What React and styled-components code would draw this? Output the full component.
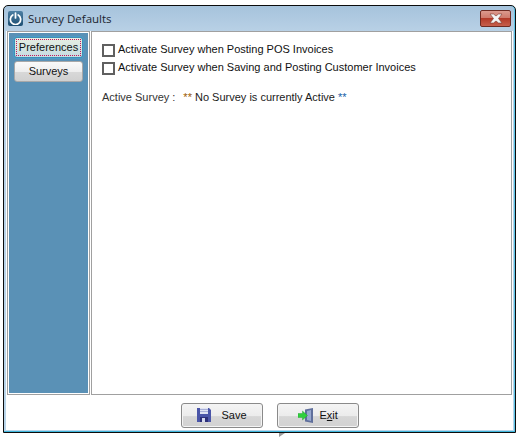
import React from 'react'
import styled, { createGlobalStyle } from 'styled-components'

const Global = createGlobalStyle`
  html, body { margin: 0; padding: 0; background: #fff; }
  body { font-family: "Liberation Sans", Arial, sans-serif; }
`

const Page = styled.div`
  width: 523px;
  height: 437px;
  padding: 5px 0 0 3px;
  box-sizing: border-box;
  overflow: hidden;
`
const Window = styled.div`
  width: 513px;
  height: 428px;
  box-sizing: border-box;
  border: 1px solid #0c0c0c;
  border-radius: 5px 5px 0 0;
  background: linear-gradient(180deg, #a6c3dc 0, #b9d1e6 26px, #b9d5ea 100%);
  padding: 0 2px 2px 2px;
  display: flex;
  flex-direction: column;
  box-shadow: inset 0 -1px 0 #3fb6dc, inset -1px 0 0 #5cc4e6;
`
const TitleBar = styled.div`
  height: 25px;
  flex: none;
  display: flex;
  align-items: center;
  gap: 5px;
  padding: 0 2px 0 2px;
`
const AppIcon = styled.div`
  width: 15px;
  height: 15px;
  border-radius: 2px;
  background: linear-gradient(180deg, #4d7fa3, #1d4f73);
  display: flex;
  align-items: center;
  justify-content: center;
`
const Title = styled.div`
  flex: 1;
  font-family: "Open Sans", sans-serif;
  font-size: 11.5px;
  color: #1b2530;
`
const CloseButton = styled.div`
  width: 31px;
  height: 17px;
  box-sizing: border-box;
  border: 1px solid #6e2b22;
  border-radius: 2px;
  background: linear-gradient(180deg, #dc9a8e 0, #cf7b6c 45%, #b33a28 50%, #c65f4c 100%);
  display: flex;
  align-items: center;
  justify-content: center;
`
const Body = styled.div`
  flex: 1;
  background: #fff;
  padding: 0 1px;
  display: flex;
  flex-direction: column;
`
const Panels = styled.div`
  height: 364px;
  flex: none;
  display: flex;
  gap: 1px;
`
const Sidebar = styled.div`
  width: 83px;
  box-sizing: border-box;
  border: 1px solid #a0a0a0;
  background: #5a91b6;
  box-shadow: inset 0 0 0 1px #fff;
  padding: 5px 6px 0 6px;
  display: flex;
  flex-direction: column;
  gap: 3px;
`
const TabButton = styled.div`
  height: 21px;
  box-sizing: border-box;
  padding-bottom: 1px;
  border: 1px solid ${p => (p.$active ? '#3f8fb5' : '#a8a8a8')};
  border-radius: 3px;
  background: ${p => (p.$active
    ? 'linear-gradient(180deg, #e6eee2, #c6dde2)'
    : 'linear-gradient(180deg, #fafafa 0, #eeeeee 50%, #d8d8d8 55%, #d0d0d0 100%)')};
  box-shadow: ${p => (p.$active ? '0 0 0 1px #4a9cc8' : 'none')};
  font-size: 11px;
  color: #111;
  display: flex;
  align-items: center;
  justify-content: center;
  position: relative;
  ${p => p.$active && `
    &::after {
      content: '';
      position: absolute;
      inset: 1px;
      border: 1px dotted #c2185b;
    }
  `}
`
const Main = styled.div`
  flex: 1;
  box-sizing: border-box;
  border: 1px solid #a0a0a0;
  background: #fff;
  padding: 8px 10px;
`
const CheckRow = styled.label`
  display: flex;
  align-items: center;
  gap: 3px;
  height: 18px;
  font-size: 11px;
  color: #111;
`
const Box = styled.span`
  width: 13px;
  height: 13px;
  margin-top: 2px;
  box-sizing: border-box;
  border: 2px solid #606060;
  background: #fff;
`
const Status = styled.div`
  margin-top: 15px;
  font-size: 11px;
  color: #1a1a1a;
  display: flex;
  gap: 8px;
`
const StatusNote = styled.span`
  color: #333;
`
const Stars = styled.span`
  color: ${p => p.$c};
`
const Footer = styled.div`
  flex: 1;
  display: flex;
  justify-content: center;
  align-items: center;
  gap: 14px;
  padding: 5px 0 0 20px;
`
const ActionButton = styled.div`
  width: 82px;
  height: 25px;
  box-sizing: border-box;
  border: 1px solid #8a8a8a;
  border-radius: 3px;
  background: linear-gradient(180deg, #f4f4f4 0, #ececec 50%, #d6d6d6 55%, #d2d2d2 100%);
  box-shadow: inset 0 0 0 1px #f4f4f4;
  display: flex;
  align-items: center;
  padding-left: ${p => p.$pad}px;
  gap: ${p => p.$gap}px;
  font-size: 11px;
  color: #111;
`
const Pointer = styled.div`
  position: absolute;
  left: 279px;
  top: 433px;
  width: 0;
  height: 0;
  border-top: 4px solid #999;
  border-right: 6px solid transparent;
`

const Underline = styled.span`
  text-decoration: underline;
`

export default function App() {
  return (
    <Page>
      <Global />
      <Window>
        <TitleBar>
          <AppIcon>
            <svg width="13" height="13" viewBox="0 0 24 24" fill="none" stroke="#fff" strokeWidth="3.2" strokeLinecap="round">
              <path d="M7 5.5a9.5 9.5 0 1 0 10 0" />
              <path d="M12 2v9" />
            </svg>
          </AppIcon>
          <Title>Survey Defaults</Title>
          <CloseButton>
            <svg width="14" height="11" viewBox="0 0 14 11">
              <path d="M1 1h3.5l2.5 2 2.5-2H13L9.5 5.5 13 10H9.5L7 8l-2.500 2H1l3.500-4.500z" fill="#f4f4f4" stroke="#7a3a30" strokeWidth=".6" />
            </svg>
          </CloseButton>
        </TitleBar>
        <Body>
          <Panels>
            <Sidebar>
              <TabButton $active>Preferences</TabButton>
              <TabButton>Surveys</TabButton>
            </Sidebar>
            <Main>
              <CheckRow><Box />Activate Survey when Posting POS Invoices</CheckRow>
              <CheckRow><Box />Activate Survey when Saving and Posting Customer Invoices</CheckRow>
              <Status>
                <StatusNote>Active Survey :</StatusNote>
                <span>
                  <Stars $c="#9a5a00">**</Stars> No Survey is currently Active <Stars $c="#1560a8">**</Stars>
                </span>
              </Status>
            </Main>
          </Panels>
          <Footer>
            <ActionButton $pad={15} $gap={11}>
              <svg width="14" height="14" viewBox="0 0 14 14">
                <path d="M0 0h12l2 2v12H0z" fill="#4a55a8" />
                <path d="M3 0h8v6H3z" fill="#dfe3f2" />
                <path d="M3 1.500h8M3 3.500h8" stroke="#9aa3d0" strokeWidth=".8" />
                <path d="M3 9h8v5H3z" fill="#2c2f78" />
                <path d="M5 10h3v4H5z" fill="#d4d8ee" />
              </svg>
              Save
            </ActionButton>
            <ActionButton $pad={20} $gap={7}>
              <svg width="15" height="15" viewBox="0 0 15 15">
                <path d="M7 1.500l8-1.500v15l-8-1.500z" fill="#5f6f9c" />
                <path d="M9 3l4-1v11l-4-1z" fill="#98a8cf" />
                <path d="M0 5.500h4.500V3L9.500 7.500 4.500 12V9.500H0z" fill="#2fd03c" stroke="#1f9a2a" strokeWidth=".4" />
              </svg>
              <span>E<Underline>x</Underline>it</span>
            </ActionButton>
          </Footer>
        </Body>
      </Window>
      <Pointer />
    </Page>
  )
}
